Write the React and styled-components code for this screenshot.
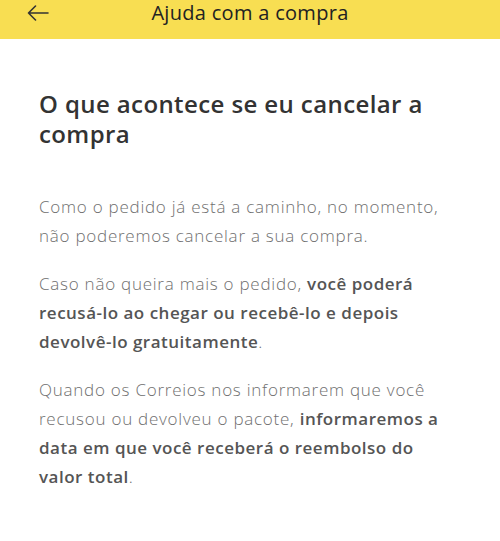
import React from 'react';
import styled, { createGlobalStyle } from 'styled-components';

const GlobalStyle = createGlobalStyle`
  html, body {
    margin: 0;
    padding: 0;
    background: #fff;
  }
  body {
    font-family: "Open Sans", "Lato", sans-serif;
    -webkit-font-smoothing: antialiased;
  }
`;

function BackArrow() {
  return (
    <svg width="22" height="16" viewBox="0 0 22 16" fill="none">
      <path
        d="M21 8H1.5M8.5 1L1.5 8l7 7"
        stroke="#333"
        strokeWidth="1.6"
        strokeLinecap="round"
        strokeLinejoin="round"
      />
    </svg>
  );
}

export default function App() {
  return (
    <Page>
      <GlobalStyle />
      <Header>
        <BackButton>
          <BackArrow />
        </BackButton>
        <HeaderTitle>Ajuda com a compra</HeaderTitle>
      </Header>
      <Content>
        <Title>O que acontece se eu cancelar a compra</Title>
        <Paragraph>
          Como o pedido já está a caminho, no momento, não poderemos cancelar a sua compra.
        </Paragraph>
        <Paragraph>
          Caso não queira mais o pedido, <Strong>você poderá recusá-lo ao chegar ou recebê-lo e depois devolvê-lo gratuitamente</Strong>.
        </Paragraph>
        <Paragraph>
          Quando os Correios nos informarem que você recusou ou devolveu o pacote, <Strong>informaremos a data em que você receberá o reembolso do valor total</Strong>.
        </Paragraph>
      </Content>
    </Page>
  );
}

const Page = styled.div`
  width: 500px;
  min-height: 541px;
  background: #fff;
`;

const Header = styled.header`
  position: relative;
  display: flex;
  align-items: flex-start;
  justify-content: center;
  height: 39px;
  box-sizing: border-box;
  background: #f8de52;
`;

const BackButton = styled.div`
  position: absolute;
  left: 27px;
  top: 5px;
  display: flex;
`;

const HeaderTitle = styled.div`
  font-size: 20px;
  letter-spacing: 0.3px;
  color: #222;
  line-height: 26px;
`;

const Content = styled.main`
  width: 420px;
  padding: 50px 0 0 39px;
`;

const Title = styled.h1`
  margin: 0 0 43px;
  font-size: 24px;
  font-weight: 600;
  letter-spacing: 0.4px;
  line-height: 30px;
  color: #333;
`;

const Paragraph = styled.p`
  max-width: 409px;
  margin: 0 0 19px;
  font-size: 17px;
  font-weight: 300;
  letter-spacing: 0.75px;
  line-height: 29px;
  color: #6f6f6f;
`;

const Strong = styled.strong`
  font-weight: 600;
  letter-spacing: 0.5px;
  color: #555;
`;
